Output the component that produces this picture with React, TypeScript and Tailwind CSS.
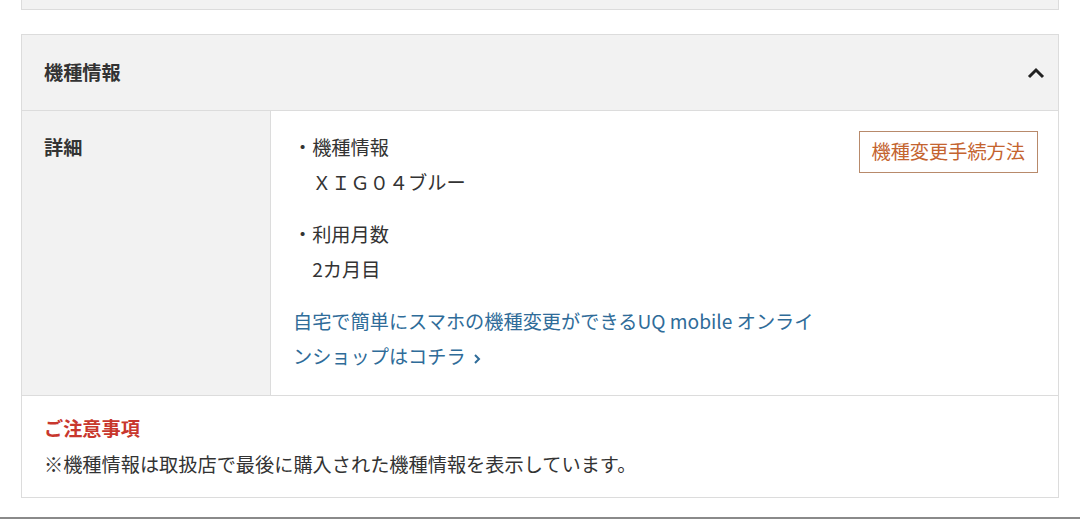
const FONT = { fontFamily: '"Noto Sans CJK JP", "Noto Sans", sans-serif' };

function ChevronUp() {
  return (
    <svg width="18" height="12" viewBox="0 0 18 12" className="block">
      <polyline points="2,10 9,3 16,10" fill="none" stroke="#222" strokeWidth="3" strokeLinejoin="miter" />
    </svg>
  );
}

export default function App() {
  return (
    <div className="w-[1080px] h-[520px] bg-white text-[#333] text-[19.2px] overflow-hidden" style={FONT}>
      <div className="mx-[21px] h-[10px] bg-[#f2f2f2] border border-t-0 border-[#dcdcdc]" />

      <section className="mx-[21px] mt-[24px] border border-[#dcdcdc]">
        <div className="h-[76px] bg-[#f2f2f2] border-b border-[#dcdcdc] flex items-center justify-between pl-[22px] pr-[13px]">
          <h2 className="font-bold leading-none">機種情報</h2>
          <ChevronUp />
        </div>

        <div className="grid grid-cols-[249px_1fr] h-[284px]">
          <div className="bg-[#f2f2f2] border-r border-[#dcdcdc] pl-[22px] pt-[19px] font-bold leading-[35px]">詳細</div>
          <div className="flex justify-between pl-[22px] pr-[20px] pt-[19px]">
            <div className="leading-[35px]">
              <div>・機種情報</div>
              <div className="pl-[19.2px]">ＸＩＧ０４ブルー</div>
              <div className="mt-[17px]">・利用月数</div>
              <div className="pl-[19.2px]">2カ月目</div>
              <a className="block mt-[17px] text-[#2f6c99]">
                自宅で簡単にスマホの機種変更ができるUQ mobile オンライ
                <br />
                ンショップはコチラ
                <svg width="10" height="12" viewBox="0 0 10 12" className="inline-block ml-[6px] align-[-1px]">
                  <polyline points="3,2 7,6 3,10" fill="none" stroke="#2f6c99" strokeWidth="2" />
                </svg>
              </a>
            </div>
            <div className="shrink-0 mt-[1px] h-[42px] px-[12px] border border-[#b88a6b] text-[#c4642f] flex items-center leading-none">
              機種変更手続方法
            </div>
          </div>
        </div>

        <div className="border-t border-[#dcdcdc] px-[22px] pt-[14px] pb-[15px] leading-[36px]">
          <div className="text-[#c8372d] font-bold">ご注意事項</div>
          <div>※機種情報は取扱店で最後に購入された機種情報を表示しています。</div>
        </div>
      </section>

      <div className="mt-[19px] border-t-2 border-[#8a8a8a]" />
    </div>
  );
}
